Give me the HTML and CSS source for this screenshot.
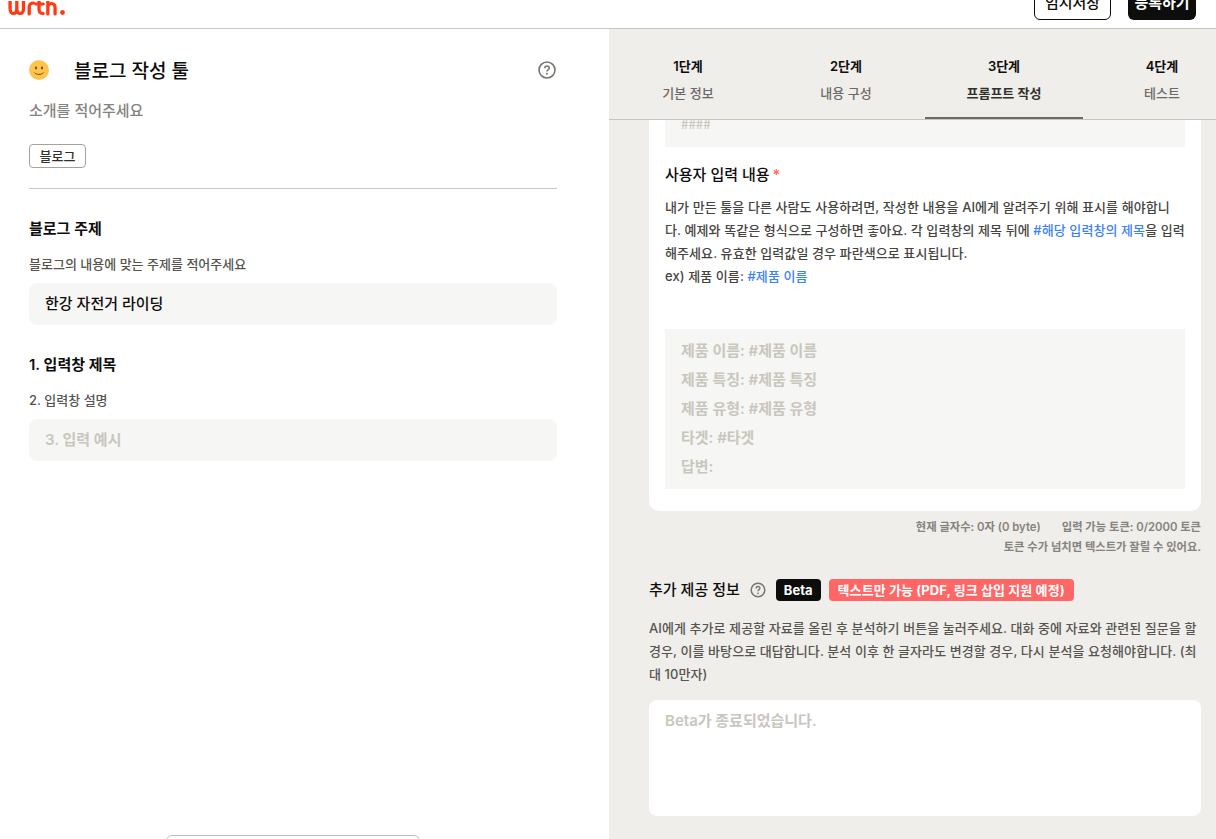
FILE: index.html
```html
<!DOCTYPE html>
<html lang="ko">
<head>
<meta charset="utf-8">
<title>블로그 작성 툴</title>
<link rel="stylesheet" href="styles.css">
</head>
<body>
<header class="topbar">
  <svg class="logo" viewBox="0 0 60 20" width="60" height="20" aria-label="wrtn">
    <g fill="none" stroke="#ff3a12" stroke-width="3.200" stroke-linecap="round" transform="scale(1.035 1)">
      <path d="M2 0v7c0 4 1.300 5.500 3.200 5.500S8.500 11 8.500 7V0M8.500 7c0 4 1.300 5.500 3.200 5.500S15 11 15 7V0"/>
      <path d="M20.500 13V6c0-3 1.500-4 4.500-4"/>
      <path d="M30 -2v10c0 3.500 1 4.500 4 4.500"/>
      <path d="M27 3h7"/>
      <path d="M38.500 13V0M38.500 7c0-3 1.500-4.500 3.500-4.500S45.500 4 45.500 7v6"/>
    </g>
    <circle cx="54.500" cy="11.500" r="2.400" fill="#ff3a12"/>
  </svg>
  <div class="actions">
    <button class="btn btn-line">임시저장</button>
    <button class="btn btn-dark">등록하기</button>
  </div>
</header>
<main class="split">
  <section class="preview">
    <div class="title-row">
      <svg class="emoji" viewBox="0 0 20 20" width="20" height="20">
        <ellipse cx="10" cy="10" rx="10" ry="10" fill="#ffc44d"/>
        <ellipse cx="7" cy="8" rx="1" ry="1.400" fill="#6b4a1a"/>
        <ellipse cx="13" cy="8" rx="1" ry="1.400" fill="#6b4a1a"/>
        <path d="M5.500 12.500c1.500 2.500 7.500 2.500 9 0" fill="none" stroke="#6b4a1a" stroke-width="1"/>
      </svg>
      <h1 class="title">블로그 작성 툴</h1>
      <svg class="help" viewBox="0 0 18 18" width="18" height="18">
        <circle cx="9" cy="9" r="8" fill="none" stroke="#77756f" stroke-width="1.600"/>
        <path d="M6.800 7.200c0-3 4.500-3 4.500-.2 0 1.600-2.300 1.700-2.300 3.500" fill="none" stroke="#77756f" stroke-width="1.500"/>
        <circle cx="9" cy="12.800" r="1" fill="#77756f"/>
      </svg>
    </div>
    <p class="intro">소개를 적어주세요</p>
    <span class="tag">블로그</span>
    <hr class="rule">
    <h2 class="field-title">블로그 주제</h2>
    <p class="field-desc">블로그의 내용에 맞는 주제를 적어주세요</p>
    <div class="input filled">한강 자전거 라이딩</div>
    <h2 class="field-title second">1. 입력창 제목</h2>
    <p class="field-desc">2. 입력창 설명</p>
    <div class="input placeholder">3. 입력 예시</div>
    <div class="floating"></div>
  </section>
  <section class="editor">
    <nav class="steps">
      <div class="step"><b>1단계</b><span>기본 정보</span></div>
      <div class="step"><b>2단계</b><span>내용 구성</span></div>
      <div class="step active"><b>3단계</b><span>프롬프트 작성</span></div>
      <div class="step"><b>4단계</b><span>테스트</span></div>
    </nav>
    <div class="scroll">
      <div class="card">
        <div class="cut-box">####</div>
        <h3 class="card-title">사용자 입력 내용<em>*</em></h3>
        <p class="card-text">내가 만든 툴을 다른 사람도 사용하려면, 작성한 내용을 AI에게 알려주기 위해 표시를 해야합니다. 예제와 똑같은 형식으로 구성하면 좋아요. 각 입력창의 제목 뒤에 <a>#해당 입력창의 제목</a>을 입력해주세요. 유효한 입력값일 경우 파란색으로 표시됩니다.<br>ex) 제품 이름: <a>#제품 이름</a></p>
        <div class="sample">제품 이름: #제품 이름<br>제품 특징: #제품 특징<br>제품 유형: #제품 유형<br>타겟: #타겟<br>답변:</div>
      </div>
      <div class="counts">
        <p><span>현재 글자수: 0자 (0 byte)</span><span>입력 가능 토큰: 0/2000 토큰</span></p>
        <p>토큰 수가 넘치면 텍스트가 잘릴 수 있어요.</p>
      </div>
      <div class="extra-head">
        <h3 class="extra-title">추가 제공 정보</h3>
        <svg class="help-small" viewBox="0 0 16 16" width="16" height="16">
          <circle cx="8" cy="8" r="6.800" fill="none" stroke="#77756f" stroke-width="1.500"/>
          <path d="M6.100 6.400c0-2.500 3.800-2.500 3.800-.2 0 1.400-1.900 1.400-1.900 3" fill="none" stroke="#77756f" stroke-width="1.400"/>
          <circle cx="8" cy="11.300" r=".9" fill="#77756f"/>
        </svg>
        <span class="badge black">Beta</span>
        <span class="badge red">텍스트만 가능 (PDF, 링크 삽입 지원 예정)</span>
      </div>
      <p class="extra-text">AI에게 추가로 제공할 자료를 올린 후 분석하기 버튼을 눌러주세요. 대화 중에 자료와 관련된 질문을 할 경우, 이를 바탕으로 대답합니다. 분석 이후 한 글자라도 변경할 경우, 다시 분석을 요청해야합니다. (최대 10만자)</p>
      <div class="extra-box">Beta가 종료되었습니다.</div>
    </div>
  </section>
</main>
</body>
</html>
```
FILE: styles.css
```css
* { box-sizing: border-box; }
html, body { height: 100%; }
body {
  margin: 0;
  height: 839px;
  overflow: hidden;
  display: flex;
  flex-direction: column;
  background: #fff;
  color: #0d0d0c;
  font-family: Inter, "Noto Sans CJK KR", sans-serif;
}
h1, h2, h3, p { margin: 0; }

.topbar {
  flex: 0 0 29px;
  display: flex;
  align-items: flex-end;
  justify-content: space-between;
  overflow: hidden;
  padding: 0 20px 8px 8px;
  border-bottom: 1px solid #c9c6bd;
}
.logo { display: block; margin-bottom: -1px; flex: none; }
.actions { display: flex; gap: 17px; }
.btn {
  height: 32px;
  border-radius: 6px;
  font: 600 15px Inter, "Noto Sans CJK KR", sans-serif;
  padding: 0 0 6px;
}
.btn-line { width: 77px; background: #fff; border: 1px solid #0d0d0c; color: #0d0d0c; font-weight: 500; }
.btn-dark { width: 68px; background: #0d0d0c; border: 0; color: #fff; }

.split { flex: 1; display: flex; min-height: 0; }

.preview {
  position: relative;
  flex: 0 0 609px;
  padding: 31px 52px 0 29px;
}
.title-row { display: flex; align-items: center; height: 22px; }
.emoji { flex: none; margin-top: -3px; }
.title { flex: 1; margin: 2px 0 0 25px; font-size: 19px; font-weight: 500; line-height: 22px; }
.help { flex: none; margin: -3px 1px 0 0; }
.intro { margin-top: 18px; font-size: 15px; font-weight: 500; line-height: 22px; color: #85837d; }
.tag {
  display: inline-block;
  margin-top: 22px;
  height: 24px;
  padding: 0 9.500px;
  border: 1px solid #a5a297;
  border-radius: 4px;
  font-size: 13px;
  font-weight: 500;
  line-height: 22px;
  color: #31302c;
  vertical-align: top;
}
.rule { margin: 20px 0 0; border: 0; border-top: 1px solid #c9c6bd; }
.field-title { margin-top: 30px; font-size: 15px; font-weight: 600; line-height: 20px; }
.field-title.second { margin-top: 30px; }
.field-desc { margin-top: 16px; font-size: 13px; font-weight: 500; line-height: 18px; color: #56544f; }
.input {
  margin-top: 10px;
  height: 42px;
  padding: 0 16px;
  border-radius: 8px;
  background: #f6f6f4;
  font-size: 15px;
  font-weight: 500;
  line-height: 42px;
}
.input.placeholder { color: #c9c6bd; font-weight: 600; }
.floating {
  position: absolute;
  left: 166px;
  top: 806px;
  width: 254px;
  height: 40px;
  border: 1px solid #c0bdb5;
  border-radius: 6px;
  background: #fff;
}

.editor {
  flex: 1;
  min-width: 0;
  display: flex;
  flex-direction: column;
  background: #efeeea;
}
.steps {
  flex: 0 0 91px;
  display: grid;
  grid-template-columns: repeat(4, 158px);
  overflow: hidden;
  border-bottom: 1px solid #c9c6bd;
}
.step {
  display: flex;
  flex-direction: column;
  align-items: center;
  padding-top: 27px;
  font-size: 13px;
  font-weight: 500;
  color: #6c6a64;
}
.step b { font-size: 13px; font-weight: 600; line-height: 20px; color: #0d0d0c; }
.step span { margin-top: 7px; line-height: 20px; }
.step.active { color: #31302c; font-weight: 600; border-bottom: 2px solid #6c6a64; }

.scroll {
  flex: 1;
  min-height: 0;
  overflow: hidden;
  padding: 0 15px 0 40px;
}
.card {
  padding: 0 16px 22px;
  background: #fff;
  border-radius: 0 0 10px 10px;
}
.cut-box {
  height: 27px;
  padding: 0 16px;
  background: #f6f6f4;
  font-family: "Noto Sans CJK KR", sans-serif;
  font-size: 13px;
  font-weight: 500;
  line-height: 8px;
  color: #c9c6bd;
  overflow: hidden;
}
.card-title { margin-top: 17px; font-size: 15px; font-weight: 500; line-height: 22px; }
.card-title em { margin-left: 3px; font-style: normal; color: #ff6666; }
.card-text { margin-top: 10px; font-size: 13px; letter-spacing: .08px; font-weight: 500; line-height: 23px; color: #46443f; }
.card-text a { color: #3b82f6; }
.sample {
  margin-top: 41px;
  padding: 7px 16px 2px;
  background: #f6f6f4;
  font-size: 15px;
  font-weight: 600;
  line-height: 29px;
  color: #c9c6bd;
  height: 160px;
}
.counts { margin-top: 6px; font-size: 11.300px; font-weight: 600; line-height: 20px; color: #85837d; text-align: right; }
.counts span + span { margin-left: 21px; }
.extra-head { display: flex; align-items: center; margin-top: 22px; height: 22px; }
.extra-title { font-size: 15px; font-weight: 500; line-height: 22px; }
.help-small { margin-left: 10px; flex: none; }
.badge {
  height: 22px;
  border-radius: 4px;
  color: #fff;
  font-size: 13px;
  font-weight: 700;
  line-height: 22px;
}
.black { margin-left: 10px; padding: 0 8px; background: #0d0d0c; }
.red { margin-left: 8px; padding: 0 9px; letter-spacing: .1px; background: #ff6666; }
.extra-text { margin-top: 16px; font-size: 13px; letter-spacing: .07px; font-weight: 500; line-height: 23px; color: #56544f; }
.extra-box {
  margin-top: 14px;
  height: 116px;
  padding: 10px 16px;
  border-radius: 8px;
  background: #fff;
  font-size: 15px;
  font-weight: 600;
  line-height: 22px;
  color: #c9c6bd;
}
```
